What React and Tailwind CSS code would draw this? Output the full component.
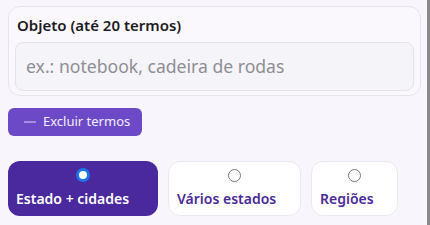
export default function App() {
  const options = [
    { id: 'estado', label: 'Estado + cidades', width: 'w-[150px]', active: true },
    { id: 'varios', label: 'Vários estados', width: 'w-[133px]', active: false },
    { id: 'regioes', label: 'Regiões', width: 'w-[87px]', active: false },
  ]

  return (
    <div className="min-h-[225px] w-[430px] border-r-[3px] border-[#8a8a8a] bg-[#f8f6fc] pl-2 pr-[6px] pt-[6px] font-['Noto_Sans',sans-serif]">
      <div className="rounded-xl border border-[#e8e4ee] bg-[#faf8fd] px-[6px] pb-[4px] pt-[7px]">
        <p className="px-[2px] text-[15px] font-semibold leading-[22px] text-[#1d1b22]">Objeto (até 20 termos)</p>
        <div className="mt-[6px] flex h-[49px] items-center rounded-lg border border-[#e5e2ea] bg-[#f5f4f8] px-[10px]">
          <input
            type="text"
            placeholder="ex.: notebook, cadeira de rodas"
            className="w-full bg-transparent text-[17.6px] text-[#333] outline-none placeholder:text-[#8f8d94]"
          />
        </div>
      </div>

      <button className="mt-[12px] flex h-[28px] items-center gap-[7px] rounded-md bg-[#6c4ac7] pl-[16px] pr-[12px] text-[13px] text-[#f3effc]">
        <span className="block h-[1.5px] w-[12px] bg-[#a58fe3]" />
        Excluir termos
      </button>

      <div className="mt-[25px] flex gap-[10px]">
        {options.map((o) => (
          <label
            key={o.id}
            className={`flex h-[55px] ${o.width} flex-col rounded-xl px-2 pt-[7px] ${
              o.active ? 'bg-[#4a289e] text-white' : 'border border-[#ebe8f0] bg-white text-[#4a2a96]'
            }`}
          >
            {o.active ? (
              <span className="block h-[14px] w-[14px] self-center rounded-full border-[3px] border-[#1f74ea] bg-white" />
            ) : (
              <span className="block h-[13px] w-[13px] self-center rounded-full border-[1.5px] border-[#777] bg-white" />
            )}
            <span className="mt-[7px] whitespace-nowrap text-[14px] font-semibold leading-[20px]">{o.label}</span>
          </label>
        ))}
      </div>
    </div>
  )
}
